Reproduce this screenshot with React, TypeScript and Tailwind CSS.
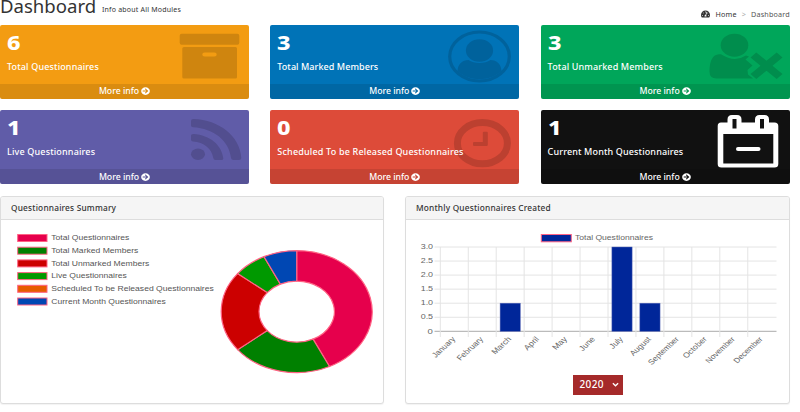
import type { ReactNode } from "react";
import { FaArrowCircleRight, FaTachometerAlt } from "react-icons/fa";

type Tile = {
  value: number;
  label: string;
  labelClass: string;
  color: string;
  iconColor: string;
  icon: ReactNode;
};

const tiles: Tile[] = [
  {
    value: 6,
    label: "Total Questionnaires",
    labelClass: "tracking-[0.15px]",
    color: "bg-[#f39c12]",
    iconColor: "text-[#cf850f]",
    icon: (
      <>
        <rect x="179.7" y="8.7" width="59.6" height="11" rx="2" />
        <path
          fillRule="evenodd"
          d="M184 22H235.500Q237 22 237 23.500V52Q237 53.500 235.500 53.500H184Q182.300 53.500 182.300 52V23.500Q182.300 22 184 22ZM204.500 27.500Q202.300 27.500 202.300 29.500Q202.300 31.500 204.500 31.500H214.500Q216.700 31.500 216.700 29.500Q216.700 27.500 214.500 27.500Z"
        />
      </>
    ),
  },
  {
    value: 3,
    label: "Total Marked Members",
    labelClass: "tracking-[0.07px]",
    color: "bg-[#0073b7]",
    iconColor: "text-[#00629c]",
    icon: (
      <>
        <ellipse cx="209.5" cy="31.500" rx="29.800" ry="24.500" fill="none" stroke="currentColor" strokeWidth="3.200" />
        <ellipse cx="209.5" cy="25.500" rx="13.600" ry="11.200" />
        <path d="M187.500 46C188 39 192 35 198.500 35C204 39 215 39 220.500 35C227 35 231 39 231.500 46C220 57 199 57 187.500 46Z" />
      </>
    ),
  },
  {
    value: 3,
    label: "Total Unmarked Members",
    labelClass: "tracking-[0.14px]",
    color: "bg-[#00a65a]",
    iconColor: "text-[#008d4d]",
    icon: (
      <>
        <ellipse cx="193.500" cy="20.200" rx="13.800" ry="11.500" />
        <path d="M180 29.300Q193.500 38 205 30.500L208 31.500L204.500 34.500L211.500 40.500L206.500 45L207 49.500L212 53.500H175.500Q168.500 53.500 168.500 46.500Q168.500 30 178 29.300Z" />
        <path d="M215.300 27.500L225.500 35.700L235.700 27.500L241.500 32.500L231.500 40.700L241.500 49L235.700 54L225.500 45.700L215.300 54L209.500 49L219.500 40.700L209.500 32.500Z" />
      </>
    ),
  },
  {
    value: 1,
    label: "Live Questionnaires",
    labelClass: "tracking-[0.16px]",
    color: "bg-[#605ca8]",
    iconColor: "text-[#524e8f]",
    icon: (
      <>
        <ellipse cx="198" cy="44.300" rx="7" ry="5.700" />
        <path d="M191 25.500Q191 23.800 193.500 23.900C210 25 222 35 223.300 48.500Q223.300 50 221.500 50H215.500Q213.500 50 213.300 48C211.500 38 204 32.500 193 31.500Q191 31.300 191 29.500Z" />
        <path d="M191 11Q191 9 193.500 9.100C219 10 240 26 241.300 48Q241.300 50 239 50H233.500Q231.300 50 231 48C229 30.500 214 18.500 193 17.200Q191 17 191 15.500Z" />
      </>
    ),
  },
  {
    value: 0,
    label: "Scheduled To be Released Questionnaires",
    labelClass: "tracking-[0.19px]",
    color: "bg-[#dd4b39]",
    iconColor: "text-[#bc4030]",
    icon: (
      <>
        <ellipse cx="212.400" cy="33.200" rx="25" ry="20.600" fill="none" stroke="currentColor" strokeWidth="7" />
        <path d="M214 21.700H216.800Q217.800 21.700 217.800 22.700V34.700Q217.800 35.900 216.500 35.900H204Q203 35.900 203 35V33Q203 32 204 32H212.800V22.700Q212.800 21.700 214 21.700Z" />
      </>
    ),
  },
  {
    value: 1,
    label: "Current Month Questionnaires",
    labelClass: "tracking-[0.14px]",
    color: "bg-[#111111]",
    iconColor: "text-white",
    icon: (
      <>
        <path
          fillRule="evenodd"
          d="M180 12.500H186.500V9.500Q186.500 5 191 5H196Q200.500 5 200.500 9.500V12.500H214V9.500Q214 5 218.500 5H223.500Q228 5 228 9.500V12.500H233.500Q237.300 12.500 237.300 16V54Q237.300 57.500 233.500 57.500H180.500Q176.700 57.500 176.700 54V16Q176.700 12.500 180 12.500ZM182.300 24V53.500H232.300V24ZM191.500 9V18.500H195.500V9ZM219 9V18.500H223V9Z"
        />
        <rect x="195" y="37" width="24.500" height="4" rx="2" />
      </>
    ),
  },
];

const summary = [
  { label: "Total Questionnaires", value: 6, color: "#e6004c", width: 78 },
  { label: "Total Marked Members", value: 3, color: "#008000", width: 87 },
  { label: "Total Unmarked Members", value: 3, color: "#cc0000", width: 98 },
  { label: "Live Questionnaires", value: 1, color: "#009900", width: 75.5 },
  { label: "Scheduled To be Released Questionnaires", value: 0, color: "#e65c00", width: 162.5 },
  { label: "Current Month Questionnaires", value: 1, color: "#0047b3", width: 114.5 },
];

const months = [
  { name: "January", count: 0, width: 25 },
  { name: "February", count: 0, width: 29 },
  { name: "March", count: 1, width: 20.5 },
  { name: "April", count: 0, width: 15 },
  { name: "May", count: 0, width: 14.5 },
  { name: "June", count: 0, width: 16 },
  { name: "July", count: 3, width: 13 },
  { name: "August", count: 1, width: 22.5 },
  { name: "September", count: 0, width: 34.5 },
  { name: "October", count: 0, width: 26 },
  { name: "November", count: 0, width: 32.5 },
  { name: "December", count: 0, width: 32.5 },
];

const PINK = "#ff6384";

function InfoTile({ tile }: { tile: Tile }) {
  return (
    <div className={`relative flex h-[74px] flex-col justify-between overflow-hidden rounded-[2px] text-white ${tile.color}`}>
      <svg
        viewBox="165 0 84 60"
        className={`absolute top-0 right-0 h-[60px] w-[84px] ${tile.iconColor}`}
        fill="currentColor"
      >
        {tile.icon}
      </svg>
      <div className="relative flex flex-col items-start pt-[6px] pl-[7px]">
        <span className="origin-left scale-x-[1.2] text-[19.5px] leading-[24px] font-extrabold">{tile.value}</span>
        <span className={`mt-[6px] text-[9px] leading-[12px] font-medium whitespace-nowrap ${tile.labelClass}`}>{tile.label}</span>
      </div>
      <a
        href="#"
        className="relative flex h-[15px] items-center justify-center gap-[2px] bg-black/10 text-[8.7px] leading-none font-medium"
      >
        <span className="pt-[1px]">More info</span>
        <FaArrowCircleRight className="h-[8px] w-[9px]" preserveAspectRatio="none" />
      </a>
    </div>
  );
}

function Panel({ title, children }: { title: string; children: ReactNode }) {
  return (
    <section className="h-[208px] overflow-hidden rounded-[3px] border border-[#dddddd] bg-white shadow-[0_1px_1px_rgba(0,0,0,0.05)]">
      <h2 className="flex h-[23px] items-center border-b border-[#dddddd] bg-[#f5f5f5] pl-[10px] text-[8.3px] font-medium tracking-[0.2px] text-[#333333]">
        {title}
      </h2>
      {children}
    </section>
  );
}

function DonutChart() {
  const total = summary.reduce((sum, s) => sum + s.value, 0);
  const cx = 295.7;
  const cy = 91.6;
  const point = (fraction: number, rx: number, ry: number) => {
    const angle = fraction * Math.PI * 2 - Math.PI / 2;
    return `${cx + rx * Math.cos(angle)} ${cy + ry * Math.sin(angle)}`;
  };

  let start = 0;
  const slices = summary
    .filter((s) => s.value > 0)
    .map((s) => {
      const from = start;
      const to = start + s.value / total;
      start = to;
      return {
        color: s.color,
        d: `M${point(from, 75.5, 61)}A75.5 61 0 0 1 ${point(to, 75.5, 61)}L${point(to, 37.7, 30.5)}A37.7 30.5 0 0 0 ${point(from, 37.7, 30.5)}Z`,
      };
    });

  return (
    <svg viewBox="0 0 382 183" className="h-[183px] w-[382px] font-['Liberation_Sans',sans-serif]">
      {summary.map((s, i) => (
        <g key={s.label}>
          <rect x="16.700" y={14.5 + i * 12.7} width="29.300" height="7" fill={s.color} stroke={PINK} strokeWidth="1" />
          <text x="50.300" y={20.3 + i * 12.7} fontSize="7.800" fill="#555" textLength={s.width} lengthAdjust="spacingAndGlyphs">
            {s.label}
          </text>
        </g>
      ))}
      {slices.map((slice) => (
        <path key={slice.d} d={slice.d} fill={slice.color} stroke={PINK} strokeWidth="1.200" />
      ))}
    </svg>
  );
}

function BarChart() {
  const left = 34.3;
  const step = 27.95;
  const top = 27;
  const bottom = 111.3;
  const ticks = ["3.0", "2.5", "2.0", "1.5", "1.0", "0.5", "0"];

  return (
    <svg viewBox="0 0 383 150" className="h-[150px] w-[383px] font-['Liberation_Sans',sans-serif]" fill="#666">
      <rect x="135.300" y="14.500" width="30" height="7.300" fill="#002699" stroke={PINK} />
      <text x="169" y="20.300" fontSize="7.800" textLength="78" lengthAdjust="spacingAndGlyphs">
        Total Questionnaires
      </text>
      {ticks.map((tick, i) => {
        const y = top + (i * (bottom - top)) / 6;
        return (
          <g key={tick}>
            <line x1="28.500" x2="370.500" y1={y} y2={y} stroke={tick === "0" ? "#aaaaaa" : "#e4e4e4"} />
            <text
              x={tick === "0" ? 21.5 : 14.7}
              y={y + 2.2}
              fontSize="7.800"
              textLength={tick === "0" ? 5.3 : 12.4}
              lengthAdjust="spacingAndGlyphs"
            >
              {tick}
            </text>
          </g>
        );
      })}
      {months.map((m, i) => {
        const x = left + i * step;
        const height = (m.count * (bottom - top)) / 3;
        return (
          <g key={m.name}>
            <line x1={x} x2={x} y1={top} y2="117" stroke="#e4e4e4" />
            {m.count > 0 && (
              <rect x={x + 3.9} y={bottom - height} width="20.200" height={height} fill="#002699" stroke="#5c6bb8" strokeWidth="0.500" />
            )}
            <text
              transform={`translate(${x + 15.5} 119.500) scale(1.2 1) rotate(-48)`}
              textAnchor="end"
              fontSize="7.300"
              textLength={m.width}
              lengthAdjust="spacingAndGlyphs"
            >
              {m.name}
            </text>
          </g>
        );
      })}
    </svg>
  );
}

export default function App() {
  return (
    <main className="h-[412px] w-[800px] overflow-hidden bg-white pr-[10px] font-['Noto_Sans','Open_Sans',sans-serif] text-[#333333]">
      <header className="flex h-[24.5px] items-start justify-between">
        <h1 className="flex items-start">
          <span className="w-[102px] origin-left scale-x-[1.08] text-[17.2px] leading-[13px]">Dashboard</span>
          <small className="mt-[5px] text-[7px] leading-[10px] tracking-[0.2px]">Info about All Modules</small>
        </h1>
        <nav className="mt-[9px] flex items-center text-[7.2px] leading-[10px] tracking-[0.2px]">
          <FaTachometerAlt className="mr-[5px] h-[8px] w-[9px]" preserveAspectRatio="none" />
          <a href="#">Home</a>
          <span className="mx-[5px] text-[#aaaaaa]">&gt;</span>
          <span className="text-[#555555]">Dashboard</span>
        </nav>
      </header>

      <div className="grid grid-cols-[249px_249px_249px] gap-x-[21.3px] gap-y-[11.5px]">
        {tiles.map((tile) => (
          <InfoTile key={tile.label} tile={tile} />
        ))}
      </div>

      <div className="mt-[12px] grid grid-cols-[384px_385px] gap-x-[21px]">
        <Panel title="Questionnaires Summary">
          <DonutChart />
        </Panel>
        <Panel title="Monthly Questionnaires Created">
          <BarChart />
          <div className="flex justify-center pt-[4.5px]">
            <button
              type="button"
              className="flex h-[20px] w-[50px] items-center justify-between bg-[#a52a2a] pr-[4px] pl-[7px] text-[10px] font-medium tracking-[0.4px] text-white"
            >
              <span>2020</span>
              <svg viewBox="0 0 8 5" className="h-[5px] w-[7px]" fill="none" stroke="currentColor" strokeWidth="1.500">
                <path d="M1 1L4 4L7 1" />
              </svg>
            </button>
          </div>
        </Panel>
      </div>
    </main>
  );
}
